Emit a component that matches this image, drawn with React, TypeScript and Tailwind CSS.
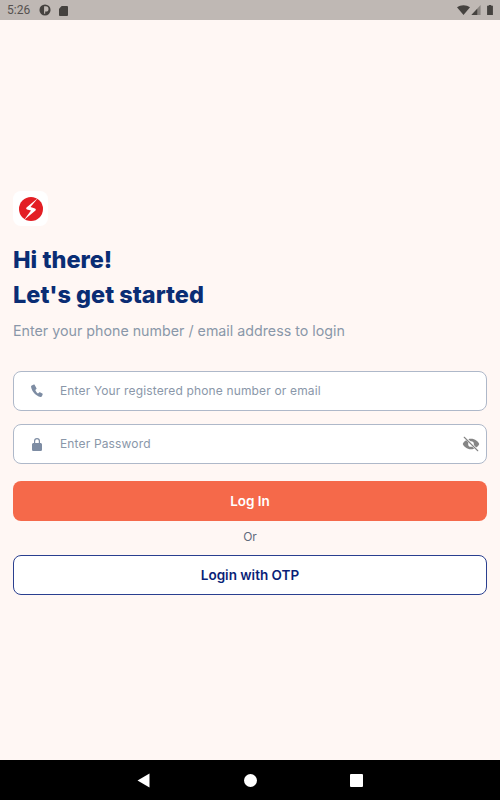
import React from "react";

const font = { fontFamily: "Inter, 'Noto Sans', sans-serif" };

function Phone() {
  return (
    <svg width="14" height="14" viewBox="0 0 24 24" fill="#7d8ca3">
      <path d="M6.600 1 3 2.400C2 2.800 1.600 3.800 1.800 4.900c1.300 8.400 8 15.800 16.200 17.400 1 .2 2-.3 2.400-1.200l1.300-3.300c.2-.6 0-1.200-.6-1.500l-4-2c-.5-.3-1.100-.2-1.500.2l-1.800 1.900c-2-1.200-3.900-3.800-4.700-6.100l1.800-1.700c.4-.4.5-1 .2-1.500L8.100 1.600C7.800 1 7.200.8 6.600 1Z" />
    </svg>
  );
}

function Lock() {
  return (
    <svg width="14" height="14" viewBox="0 0 14 14" fill="#7d8ca3">
      <path d="M4 6V4a3 3 0 0 1 6 0v2h.4c.9 0 1.600.7 1.600 1.600v4.800c0 .9-.7 1.600-1.600 1.600H3.600C2.700 14 2 13.300 2 12.400V7.600C2 6.700 2.700 6 3.600 6H4Zm1.200 0h3.600V4a1.800 1.800 0 0 0-3.600 0v2Z" />
    </svg>
  );
}

function EyeOff() {
  return (
    <svg width="18" height="18" viewBox="0 0 24 24" fill="none">
      <path fillRule="evenodd" clipRule="evenodd" fill="#858585" d="M12 5C6.500 5 2.500 8.500 1 12c1.500 3.500 5.500 7 11 7s9.500-3.500 11-7c-1.500-3.500-5.500-7-11-7Zm0 3.200a3.800 3.800 0 1 1 0 7.600 3.800 3.800 0 0 1 0-7.600Z" />
      <path d="M3.500 2.500 21 21" stroke="#fff" strokeWidth="3" />
      <path d="M3 3l18 18" stroke="#858585" strokeWidth="1.500" strokeLinecap="round" />
    </svg>
  );
}

function Logo() {
  return (
    <div className="flex h-[35px] w-[35px] items-center justify-center rounded-lg bg-white">
      <svg width="26" height="26" viewBox="0 0 26 26">
        <circle cx="13" cy="13" r="12" fill="#e31e24" />
        <path d="M20 2 8.500 11.500Q7.500 13 9 13.500L13 14.500 6 24 17.500 14.500Q18.500 13 17 12.500L12.500 11 20 2Z" fill="#fff" />
      </svg>
    </div>
  );
}

function Field({ icon, text, trailing }: { icon: React.ReactNode; text: string; trailing?: React.ReactNode }) {
  return (
    <div className="flex h-10 items-center rounded-lg border border-[#aeb8c9] bg-white">
      <div className="flex w-[46px] justify-center">{icon}</div>
      <span className="flex-1 text-[12px] tracking-[0.15px] text-[#8a97a9]">{text}</span>
      {trailing && <div className="mr-[6px] flex">{trailing}</div>}
    </div>
  );
}

export default function App() {
  return (
    <div className="flex h-[800px] w-[500px] flex-col bg-[#fff7f4]" style={font}>
      <div className="flex h-5 items-center justify-between bg-[#bfb8b4] pl-[7px] pr-[7px] text-[#4a4644]">
        <div className="flex items-center gap-[8px]">
          <span className="text-[12px] text-[#55514f]" style={{ fontFamily: "Roboto, sans-serif" }}>5:26</span>
          <svg width="12" height="12" viewBox="0 0 13 13" className="ml-[1px]">
            <circle cx="6.500" cy="6.500" r="6" fill="#45423f" />
            <path d="M5.500 2.500h2a2.800 2.800 0 0 1 0 5.600h-.8v2.400H5.500V2.500Z" fill="#bfb8b4" />
          </svg>
          <svg width="9" height="11" viewBox="0 0 10 12">
            <path d="M3 1h6a1 1 0 0 1 1 1v9a1 1 0 0 1-1 1H1a1 1 0 0 1-1-1V4l3-3Z" fill="#45423f" />
          </svg>
        </div>
        <div className="flex items-center gap-[1px]">
          <svg width="13" height="10" viewBox="0 0 16 12">
            <path d="M0 2.500C4.500-.8 11.500-.8 16 2.500L8 12 0 2.500Z" fill="#45423f" />
          </svg>
          <svg width="10" height="10" viewBox="0 0 11 12">
            <path d="M11 0v12H0L11 0Z" fill="#45423f" fillOpacity="0.45" />
            <path d="M7 4.500V12H0l7-7.500Z" fill="#45423f" />
          </svg>
          <svg width="6" height="10" viewBox="0 0 7 12" className="ml-[5px]">
            <path d="M2 0h3v1h2v11H0V1h2V0Z" fill="#45423f" />
          </svg>
        </div>
      </div>

      <div className="flex flex-1 flex-col px-[13px] pt-[171px]">
        <Logo />
        <h1 className="mt-[16px] text-[23.500px] font-extrabold leading-[35px] text-[#0a2d74]">
          Hi there!
          <br />
          Let's get started
        </h1>
        <p className="mt-[9px] text-[14.250px] leading-[20px] text-[#8a97a9]">
          Enter your phone number / email address to login
        </p>
        <div className="mt-[30px] flex flex-col gap-[13px]">
          <Field icon={<Phone />} text="Enter Your registered phone number or email" />
          <Field icon={<Lock />} text="Enter Password" trailing={<EyeOff />} />
        </div>
        <button className="mt-[17px] flex h-10 items-center justify-center rounded-lg bg-[#f5694a] text-[13.500px] font-semibold text-white">
          Log In
        </button>
        <div className="mt-[6px] text-center text-[12px] leading-[20px] text-[#5f6b7c]">Or</div>
        <button className="mt-[8px] flex h-10 items-center justify-center rounded-lg border border-[#2a3f8f] bg-white text-[13.500px] font-semibold text-[#0a1f78]">
          Login with OTP
        </button>
      </div>

      <div className="flex h-10 items-center justify-center bg-black">
        <div className="flex w-[226px] items-center justify-between">
          <svg width="13" height="15" viewBox="0 0 13 15">
            <path d="M12.500.5v14L.5 7.500 12.500.5Z" fill="#fff" />
          </svg>
          <div className="h-[13px] w-[13px] rounded-full bg-white" />
          <div className="h-[13px] w-[13px] rounded-[1px] bg-white" />
        </div>
      </div>
    </div>
  );
}
